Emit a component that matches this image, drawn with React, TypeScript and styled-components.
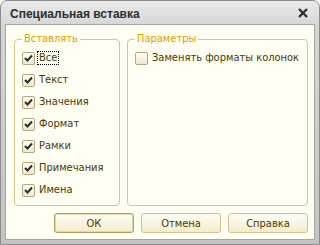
import React from "react";
import styled, { createGlobalStyle } from "styled-components";

const Global = createGlobalStyle`
  html, body { margin: 0; padding: 0; background: #ffffff; }
  body { font-family: "DejaVu Sans Condensed", "Liberation Sans", Arial, sans-serif; }
`;

const UI_FONT = `"DejaVu Sans Condensed", "Liberation Sans", Arial, sans-serif`;

const Window = styled.div`
  width: 320px;
  height: 245px;
  box-sizing: border-box;
  border-radius: 7px 7px 0 0;
  border: 1px solid #8c8c8c;
  background: linear-gradient(#ebebeb 0px, #d6d6d6 24px, #c4c4c4 100%);
  padding: 0 5px 5px 5px;
  display: flex;
  flex-direction: column;
`;

const TitleBar = styled.div`
  height: 24px;
  display: flex;
  align-items: center;
  justify-content: space-between;
  padding: 0 6px 0 4px;
`;

const Title = styled.div`
  font-family: "Liberation Sans", Arial, sans-serif;
  font-weight: bold;
  font-size: 12px;
  color: #2e2e2e;
  padding-top: 2px;
`;

const Content = styled.div`
  flex: 1;
  background: #fefef2;
  box-shadow: 0 0 0 1px #a4a4a4;
  padding: 14px 6px 6px 8px;
  display: flex;
  flex-direction: column;
  gap: 7px;
`;

const Groups = styled.div`
  display: grid;
  grid-template-columns: 106px 181px;
  gap: 7px;
  height: 167px;
`;

const Group = styled.div<{ $pl: number }>`
  position: relative;
  box-sizing: border-box;
  border: 1px solid #d6c78f;
  border-radius: 4px;
  padding: ${(p) => `7px 0 0 ${p.$pl}px`};
  display: flex;
  flex-direction: column;
`;

const Legend = styled.span`
  position: absolute;
  top: -8px;
  left: 7px;
  padding: 0 2px;
  background: #fefef2;
  color: #dc9f00;
  font-family: ${UI_FONT};
  font-size: 11px;
  line-height: 14px;
`;

const Row = styled.label`
  height: 22px;
  display: flex;
  align-items: center;
  gap: 3px;
  color: #4a3904;
  font-family: ${UI_FONT};
  font-size: 11px;
`;

const Box = styled.span`
  width: 13px;
  height: 13px;
  box-sizing: border-box;
  border: 1px solid #b5a680;
  border-radius: 2px;
  background: linear-gradient(#fffef6, #efe9d2);
  display: flex;
  align-items: center;
  justify-content: center;
  flex: none;
`;

const Label = styled.span<{ $focus?: boolean }>`
  padding: 0 1px;
  line-height: 12px;
  outline: ${(p) => (p.$focus ? "1px dotted #000" : "none")};
`;

const Buttons = styled.div`
  display: flex;
  justify-content: flex-end;
  gap: 7px;
`;

const Button = styled.button<{ $def?: boolean }>`
  width: 80px;
  height: 20px;
  box-sizing: border-box;
  border: 1px solid ${(p) => (p.$def ? "#b09e63" : "#d0c190")};
  border-radius: 3px;
  box-shadow: ${(p) => (p.$def ? "inset 0 0 0 1px #e2d7a8" : "none")};
  background: linear-gradient(#fffef7, #f4eccb);
  color: #4a3904;
  font-family: ${UI_FONT};
  font-size: 11px;
  padding: 0;
`;

const Check = () => (
  <svg width="9" height="8" viewBox="0 0 9 8">
    <path d="M1 4 L3.5 6.5 L8 1.5" stroke="#2d2d2d" strokeWidth="2" fill="none" />
  </svg>
);

const Close = () => (
  <svg width="10" height="10" viewBox="0 0 10 10">
    <path d="M1 1 L9 9 M9 1 L1 9" stroke="#2e2e2e" strokeWidth="2.4" />
  </svg>
);

const items = ["Все", "Текст", "Значения", "Формат", "Рамки", "Примечания", "Имена"];

export default function App() {
  return (
    <>
      <Global />
      <Window>
        <TitleBar>
          <Title>Специальная вставка</Title>
          <Close />
        </TitleBar>
        <Content>
          <Groups>
            <Group $pl={7}>
              <Legend>Вставлять</Legend>
              {items.map((t, i) => (
                <Row key={t}>
                  <Box>
                    <Check />
                  </Box>
                  <Label $focus={i === 0}>{t}</Label>
                </Row>
              ))}
            </Group>
            <Group $pl={7}>
              <Legend>Параметры</Legend>
              <Row>
                <Box />
                <Label>Заменять форматы колонок</Label>
              </Row>
            </Group>
          </Groups>
          <Buttons>
            <Button $def>ОК</Button>
            <Button>Отмена</Button>
            <Button>Справка</Button>
          </Buttons>
        </Content>
      </Window>
    </>
  );
}
